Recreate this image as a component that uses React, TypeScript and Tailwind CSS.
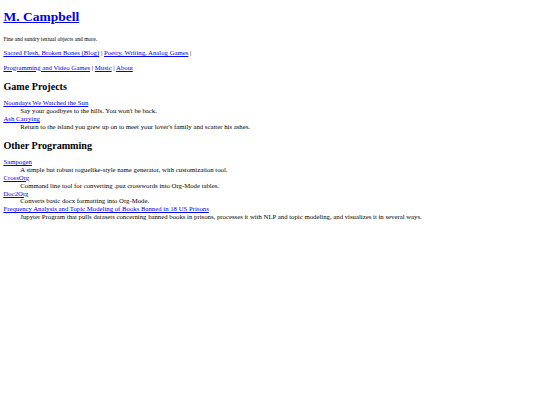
import React from "react";

const serif = { fontFamily: '"Liberation Serif", "Times New Roman", serif' };

interface Entry {
  title: string;
  blurb: string;
}

const games: Entry[] = [
  { title: "Noondays We Watched the Sun", blurb: "Say your goodbyes to the hills. You won't be back." },
  {
    title: "Ash Carrying",
    blurb: "Return to the island you grew up on to meet your lover's family and scatter his ashes.",
  },
];

const programs: Entry[] = [
  { title: "Sampogen", blurb: "A simple but robust roguelike-style name generator, with customization tool." },
  { title: "CrossOrg", blurb: "Command line tool for converting .puz crosswords into Org-Mode tables." },
  { title: "Doc2Org", blurb: "Converts basic docx formatting into Org-Mode." },
  {
    title: "Frequency Analysis and Topic Modeling of Books Banned in 18 US Prisons",
    blurb:
      "Jupyter Program that pulls datasets concerning banned books in prisons, processes it with NLP and topic modeling, and visualizes it in several ways.",
  },
];

function Link({ children }: { children: React.ReactNode }) {
  return (
    <a href="#" className="text-[#0000ee] underline">
      {children}
    </a>
  );
}

// dt = link, dd = indented blurb
function EntryList({ items, className }: { items: Entry[]; className: string }) {
  return (
    <dl className={className}>
      {items.map((it) => (
        <React.Fragment key={it.title}>
          <dt>
            <Link>{it.title}</Link>
          </dt>
          <dd className="ml-[16.9px]">{it.blurb}</dd>
        </React.Fragment>
      ))}
    </dl>
  );
}

export default function App() {
  return (
    <div className="min-h-[405px] bg-white px-[3.4px] pt-px text-black" style={serif}>
      <h1 className="mt-[8px] text-[13.5px] font-bold leading-[15px]">
        <Link>M. Campbell</Link>
      </h1>

      <p className="mt-[12px] text-[5.6px] leading-[6.5px]">Fine and sundry textual objects and more.</p>

      <p className="mt-[6.5px] text-[6.75px] leading-[8px]">
        <Link>Sacred Flesh, Broken Bones (Blog)</Link> | <Link>Poetry, Writing, Analog Games</Link> |
      </p>
      <p className="mt-[6.5px] text-[6.75px] leading-[8px]">
        <Link>Programming and Video Games</Link> | <Link>Music</Link> | <Link>About</Link>
      </p>

      <h2 className="mt-[9px] text-[10.125px] font-bold leading-[11.5px]">Game Projects</h2>
      <EntryList items={games} className="mt-[7.2px] text-[6.75px] leading-[7.9px]" />

      <h2 className="mt-[9.5px] text-[10.125px] font-bold leading-[11.5px]">Other Programming</h2>
      <EntryList items={programs} className="mt-[6.5px] text-[6.75px] leading-[7.8px]" />
    </div>
  );
}
